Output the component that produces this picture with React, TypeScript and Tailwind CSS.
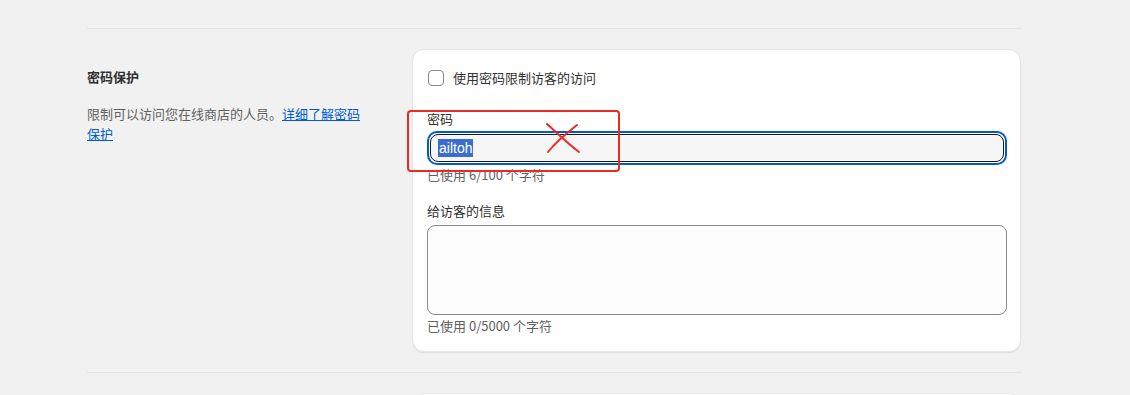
export default function App() {
  const font = { fontFamily: '"Noto Sans CJK SC", "Noto Sans", sans-serif' };
  return (
    <div className="min-h-screen bg-[#f1f1f1] text-[13px] leading-5 text-[#303030]" style={font}>
      <div className="ml-[87px] w-[934px]">
        <div className="h-[28px]" />
        <div className="border-t border-[#e3e3e3]" />

        <div className="flex pt-5 pb-5">
          <div className="w-[280px] pt-[18px]">
            <h2 className="font-semibold text-[#303030]">密码保护</h2>
            <p className="mt-[17px] text-[#616161]">
              限制可以访问您在线商店的人员。
              <a href="#" className="text-[#005bd3] underline">详细了解密码保护</a>
            </p>
          </div>

          <div className="relative ml-[45px] flex-1 rounded-xl border border-[#e6e6e6] bg-white pl-[14px] pr-[13px] pt-[18px] pb-[15px] shadow-[0_1px_1px_rgba(0,0,0,0.08)]">
            <label className="flex items-center gap-[9px]">
              <span className="ml-px h-4 w-4 rounded-[4px] border border-[#8a8a8a] bg-white" />
              <span>使用密码限制访客的访问</span>
            </label>

            <div className="mt-[21px]">
              <div>密码</div>
              <div className="mt-[2px] rounded-[10px] border-2 border-[#005bd3] p-px">
                <div className="flex h-[28px] items-center rounded-[8px] border border-[#1a1a1a] bg-[#f6f6f6] pl-[7px]">
                  <span className="bg-[#3b6ccf] px-px text-[14px] leading-[18px] text-white" style={{ fontFamily: '"Liberation Sans", sans-serif' }}>ailtoh</span>
                </div>
              </div>
              <div className="text-[#616161]">已使用 6/100 个字符</div>
            </div>

            <div className="mt-[16px]">
              <div>给访客的信息</div>
              <div className="mt-[4px] h-[90px] rounded-[8px] border border-[#8a8a8a] bg-[#fdfdfd]" />
              <div className="mt-px text-[#616161]">已使用 0/5000 个字符</div>
            </div>

            {/* red annotation */}
            <div className="pointer-events-none absolute left-[-6px] top-[60px] h-[62px] w-[213px] rounded-[4px] border-2 border-[#ec2a22]" />
            <svg className="pointer-events-none absolute left-[131px] top-[72px]" width="38" height="32" viewBox="0 0 38 32" fill="none">
              <path d="M3 2 C12 10, 24 22, 35 30" stroke="#ec2a22" strokeWidth="2" strokeLinecap="round" />
              <path d="M33 3 C24 10, 12 20, 4 30" stroke="#ec2a22" strokeWidth="2" strokeLinecap="round" />
            </svg>
          </div>
        </div>

        <div className="border-t border-[#e3e3e3]" />
        <div className="flex pt-5">
          <div className="w-[280px]" />
          <div className="ml-[45px] h-24 flex-1 rounded-xl border border-[#e6e6e6] bg-white" />
        </div>
      </div>
    </div>
  );
}
